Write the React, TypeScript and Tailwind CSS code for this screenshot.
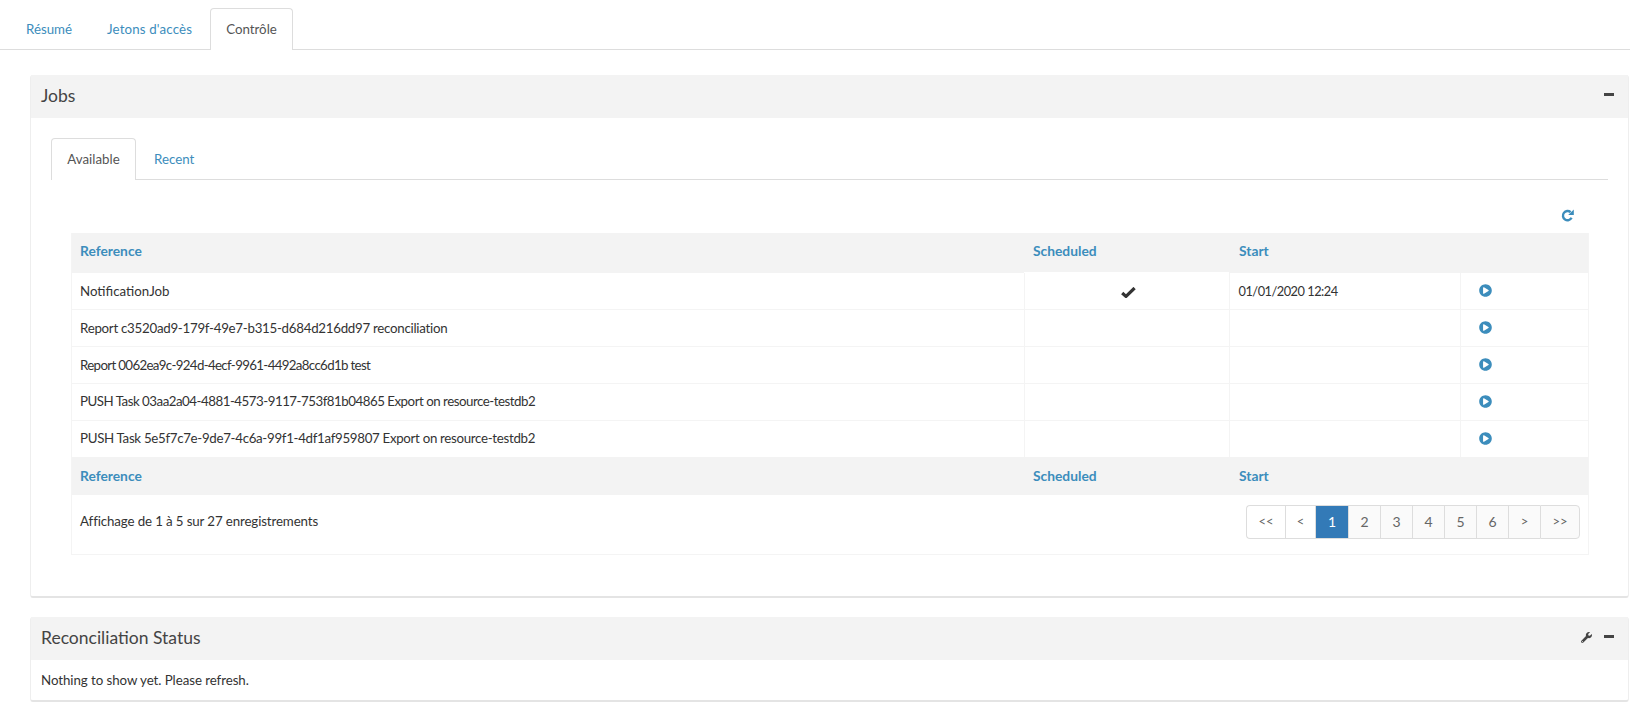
import { FaPlayCircle, FaWrench } from 'react-icons/fa';

const jobs = [
  { name: 'NotificationJob', fit: '', scheduled: true, start: '01/01/2020 12:24' },
  { name: 'Report c3520ad9-179f-49e7-b315-d684d216dd97 reconciliation', fit: 'tracking-[-0.27px]', scheduled: false, start: '' },
  { name: 'Report 0062ea9c-924d-4ecf-9961-4492a8cc6d1b test', fit: 'tracking-[-0.66px]', scheduled: false, start: '' },
  { name: 'PUSH Task 03aa2a04-4881-4573-9117-753f81b04865 Export on resource-testdb2', fit: 'tracking-[-0.49px]', scheduled: false, start: '' },
  { name: 'PUSH Task 5e5f7c7e-9de7-4c6a-99f1-4df1af959807 Export on resource-testdb2', fit: 'tracking-[-0.31px]', scheduled: false, start: '' },
];

const pages = [
  { label: '<<', w: 'w-[39px]', bg: 'bg-white', round: 'rounded-l-[4px]' },
  { label: '<', w: 'w-[30px]', bg: 'bg-white', round: '' },
  { label: '1', w: 'w-[33px]', bg: 'bg-[#337ab7]', round: '' },
  { label: '2', w: 'w-[32px]', bg: 'bg-[#fafafa]', round: '' },
  { label: '3', w: 'w-[32px]', bg: 'bg-[#fafafa]', round: '' },
  { label: '4', w: 'w-[32px]', bg: 'bg-[#fafafa]', round: '' },
  { label: '5', w: 'w-[32px]', bg: 'bg-[#fafafa]', round: '' },
  { label: '6', w: 'w-[32px]', bg: 'bg-[#fafafa]', round: '' },
  { label: '>', w: 'w-[32px]', bg: 'bg-[#fafafa]', round: '' },
  { label: '>>', w: 'w-[40px]', bg: 'bg-[#fafafa]', round: 'rounded-r-[4px]' },
];

function HeaderRow({ top }: { top?: boolean }) {
  const pad = top ? 'pb-[3px] font-bold' : 'font-bold';
  return (
    <tr className="bg-[#f3f3f3] text-left text-[13.8px] text-[#3c8dbc]">
      <th className={`px-2 ${pad}`}>Reference</th>
      <th className={`pl-[9px] ${pad}`}>Scheduled</th>
      <th className={`pl-[10px] ${pad}`}>Start</th>
      <th />
    </tr>
  );
}

function Pagination() {
  return (
    <div className="flex h-[34px] text-[14px]">
      {pages.map((p) => (
        <span
          key={p.label}
          className={`flex items-center justify-center border-y border-l border-[#ddd] last:border-r ${p.w} ${p.bg} ${p.round} ${
            p.label === '1' ? 'border-[#337ab7] text-white' : 'text-[#666]'
          } ${p.label.length > 1 || p.label === '<' || p.label === '>' ? 'text-[13px]' : ''}`}
        >
          {p.label}
        </span>
      ))}
    </div>
  );
}

function Minus() {
  return <div className="mb-[4px] h-[3px] w-[10px] bg-[#444]" />;
}

function RefreshIcon() {
  return (
    <svg width="13" height="13" viewBox="0 0 13 13" className="text-[#3c8dbc]">
      <path d="M10.6 8.8 A4.6 4.6 0 1 1 9.6 3.2" fill="none" stroke="currentColor" strokeWidth="2.4" />
      <polygon points="7.2,6 12.8,6 12.8,0.6" fill="currentColor" />
    </svg>
  );
}

function CheckIcon() {
  return (
    <svg width="15" height="11" viewBox="0 0 15 11" className="mx-auto mt-[2px] text-[#333]">
      <path d="M1.2 6 L5 9.4 L13.6 1" fill="none" stroke="currentColor" strokeWidth="3.2" />
    </svg>
  );
}

export default function App() {
  return (
    <div className="h-[703px] overflow-hidden bg-white font-['Lato',sans-serif] text-[13.3px] text-[#333]">
      {/* onglets du haut */}
      <div className="flex h-[50px] items-end border-b border-[#ddd] pl-[10px] text-[#3c8dbc]">
        <span className="w-[77px] pb-[9px] pl-[16px]">Résumé</span>
        <span className="w-[123px] pb-[9px] pl-[20px] tracking-[0.15px]">Jetons d'accès</span>
        <span className="-mb-px flex h-[42px] w-[83px] items-center justify-center rounded-t-[4px] border border-b-0 border-[#ddd] bg-white pt-px text-[#555]">
          Contrôle
        </span>
      </div>

      {/* panneau Jobs */}
      <section className="mt-[25px] mr-px ml-[30px] h-[523px] rounded-[3px] border-x border-b-2 border-[#eee] border-b-[#e4e4e4]">
        <header className="flex h-[43px] items-center justify-between bg-[#f3f3f3] pr-[14px] pl-[10px]">
          <h3 className="pb-px text-[17.5px] leading-none text-[#444]">Jobs</h3>
          <Minus />
        </header>

        <div className="px-[20px] pt-[20px]">
          <div className="flex h-[42px] items-end border-b border-[#ddd]">
            <span className="-mb-px flex h-[42px] w-[85px] items-center justify-center rounded-t-[4px] border border-b-0 border-[#ddd] bg-white text-[#555]">
              Available
            </span>
            <span className="pb-[9px] pl-[18px] text-[#3c8dbc]">Recent</span>
          </div>

          <div className="mr-[19px] ml-[20px]">
            <div className="flex h-[53px] items-center justify-end pt-[18px] pr-[15px]">
              <RefreshIcon />
            </div>

            <div className="border-x border-b border-[#f4f4f4]">
              <table className="w-full table-fixed border-collapse">
                <colgroup>
                  <col className="w-[952px]" />
                  <col className="w-[205px]" />
                  <col className="w-[231px]" />
                  <col />
                </colgroup>
                <thead className="[&_tr]:h-[40px]">
                  <HeaderRow top />
                </thead>
                <tbody>
                  {jobs.map((job) => (
                    <tr key={job.name} className="h-[36.8px] border-b border-[#f4f4f4] last:border-b-0">
                      <td className={`px-2 pt-px ${job.fit}`}>{job.name}</td>
                      <td className={`border-x border-[#f4f4f4] pl-[3px] text-center ${job.scheduled ? 'shadow-[0_-1px_0_#fff]' : ''}`}>
                        {job.scheduled && <CheckIcon />}
                      </td>
                      <td className="border-r border-[#f4f4f4] pt-px pl-[9px] text-[12.8px] tracking-[-0.5px]">{job.start}</td>
                      <td className="pl-[18px]">
                        <FaPlayCircle className="-mt-px text-[13px] text-[#3c8dbc]" />
                      </td>
                    </tr>
                  ))}
                </tbody>
                <tfoot className="[&_tr]:h-[38px]">
                  <HeaderRow />
                </tfoot>
              </table>

              <div className="flex h-[59px] items-start justify-between pt-[10px] pr-[8px] pl-[8px]">
                <span className="leading-[32px] tracking-[-0.12px]">Affichage de 1 à 5 sur 27 enregistrements</span>
                <Pagination />
              </div>
            </div>
          </div>
        </div>
      </section>

      {/* panneau Reconciliation */}
      <section className="mt-[19px] mr-px ml-[30px] h-[85px] rounded-[3px] border-x border-b-2 border-[#eee] border-b-[#e4e4e4]">
        <header className="flex h-[43px] items-center justify-between bg-[#f3f3f3] pr-[14px] pl-[10px]">
          <h3 className="pb-[2px] text-[17.5px] leading-none text-[#444]">Reconciliation Status</h3>
          <div className="flex items-center gap-[12px] text-[#444]">
            <FaWrench className="mb-[3px] text-[11px]" />
            <Minus />
          </div>
        </header>
        <p className="px-[10px] pt-[11px] tracking-[-0.06px]">Nothing to show yet. Please refresh.</p>
      </section>
    </div>
  );
}
